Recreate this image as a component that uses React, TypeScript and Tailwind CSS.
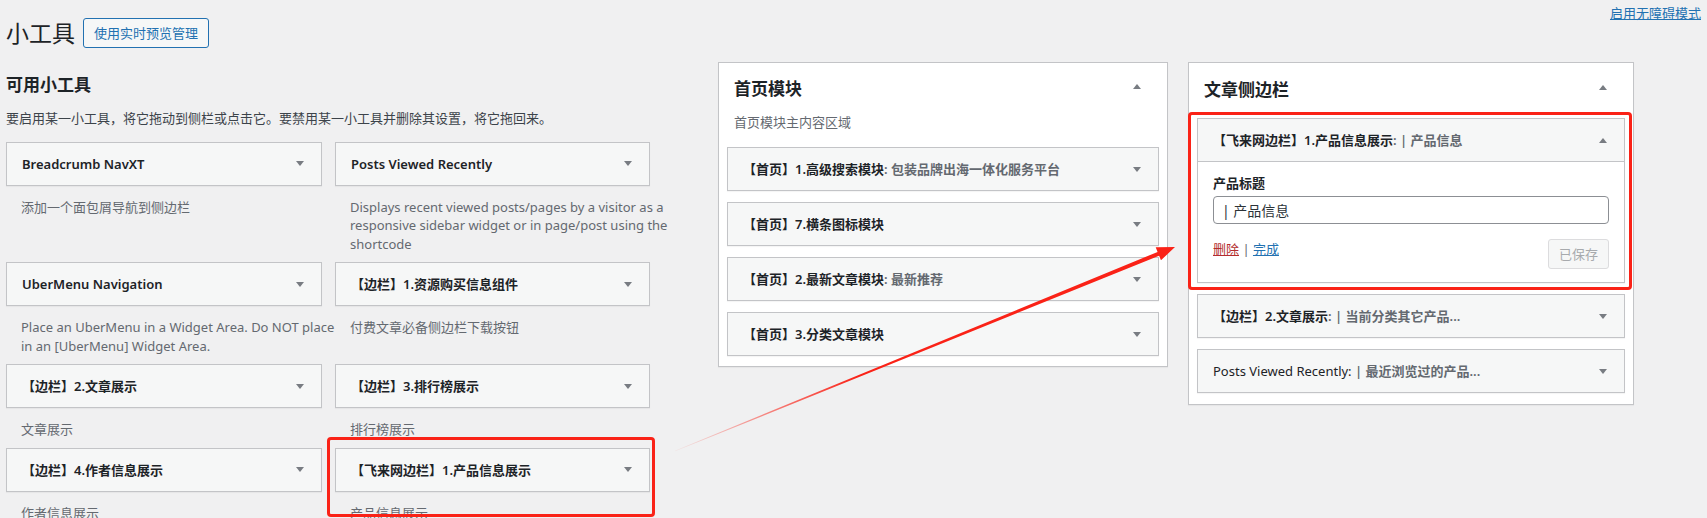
import React from "react";

const TriDown = () => (
  <svg width="8" height="5" viewBox="0 0 8 5" className="shrink-0">
    <polygon points="0,0 8,0 4,5" fill="#787c82" />
  </svg>
);
const TriUp = () => (
  <svg width="8" height="5" viewBox="0 0 8 5" className="shrink-0">
    <polygon points="0,5 8,5 4,0" fill="#787c82" />
  </svg>
);

function WidgetBox({ children }: { children: React.ReactNode }) {
  return (
    <div className="h-[44px] flex items-center justify-between border border-[#c3c4c7] bg-[#f6f7f7] pl-[15px] pr-[17px] shadow-[0_1px_1px_rgba(0,0,0,0.04)]">
      <div className="text-[13px] leading-[18px] font-semibold text-[#1d2327] whitespace-nowrap">
        {children}
      </div>
      <TriDown />
    </div>
  );
}

const Sub = ({ children }: { children: React.ReactNode }) => (
  <span className="text-[#646970]">{children}</span>
);

const leftItems: { title: string; desc: string[] }[] = [
  { title: "Breadcrumb NavXT", desc: ["添加一个面包屑导航到侧边栏"] },
  {
    title: "Posts Viewed Recently",
    desc: [
      "Displays recent viewed posts/pages by a visitor as a",
      "responsive sidebar widget or in page/post using the",
      "shortcode",
    ],
  },
  {
    title: "UberMenu Navigation",
    desc: ["Place an UberMenu in a Widget Area. Do NOT place", "in an [UberMenu] Widget Area."],
  },
  { title: "【边栏】1.资源购买信息组件", desc: ["付费文章必备侧边栏下载按钮"] },
  { title: "【边栏】2.文章展示", desc: ["文章展示"] },
  { title: "【边栏】3.排行榜展示", desc: ["排行榜展示"] },
  { title: "【边栏】4.作者信息展示", desc: ["作者信息展示"] },
  { title: "【飞来网边栏】1.产品信息展示", desc: ["产品信息展示"] },
];

export default function App() {
  return (
    <div className="relative w-[1707px] h-[518px] overflow-hidden bg-[#f0f0f1] font-['Segoe_UI','Noto_Sans','Noto_Sans_CJK_SC',sans-serif] text-[#3c434a]">
      {/* header */}
      <div className="flex justify-between items-start">
        <div className="flex items-center pt-[18px] pl-[6px]">
          <h1 className="text-[23px] leading-[30px] font-normal text-[#1d2327]">小工具</h1>
          <button className="ml-[8px] h-[30px] px-[10px] border border-[#2271b1] rounded-[3px] bg-[#f6f7f7] text-[13px] leading-[28px] text-[#2271b1]">
            使用实时预览管理
          </button>
        </div>
        <a className="mt-[4px] mr-[6px] text-[13px] leading-[18px] text-[#2271b1] underline">启用无障碍模式</a>
      </div>

      {/* main */}
      <div className="flex items-start mt-[14px] pl-[6px]">
        {/* left */}
        <div className="w-[644px]">
          <h2 className="mt-[11px] text-[17px] leading-[24px] font-semibold text-[#1d2327]">可用小工具</h2>
          <p className="mt-[12px] text-[13px] leading-[18.5px] text-[#3c434a]">
            要启用某一小工具，将它拖动到侧栏或点击它。要禁用某一小工具并删除其设置，将它拖回来。
          </p>
          <div className="mt-[14px] grid grid-cols-[316px_315px] gap-x-[13px]">
            {leftItems.map((it) => (
              <div key={it.title} className="pb-[9px]">
                <WidgetBox>{it.title}</WidgetBox>
                <div className="pt-[12px] px-[15px] text-[13px] leading-[18.5px] text-[#646970] whitespace-nowrap">
                  {it.desc.map((l, i) => (
                    <div key={i}>{l}</div>
                  ))}
                </div>
              </div>
            ))}
          </div>
        </div>

        {/* middle panel */}
        <div className="ml-[68px] w-[450px] bg-white border border-[#c3c4c7] pb-[10px] shadow-[0_1px_1px_rgba(0,0,0,0.04)]">
          <div className="flex items-center justify-between pl-[15px] pr-[26px] pt-[14px]">
            <h2 className="text-[17px] leading-[24px] font-semibold text-[#1d2327]">首页模块</h2>
            <span className="mb-[6px] flex">
              <TriUp />
            </span>
          </div>
          <p className="mt-[12px] px-[15px] text-[13px] leading-[18.5px] text-[#646970]">首页模块主内容区域</p>
          <div className="mt-[15.5px] px-[8px] flex flex-col gap-[11px]">
            <WidgetBox>
              【首页】1.高级搜索模块<Sub>: 包装品牌出海一体化服务平台</Sub>
            </WidgetBox>
            <WidgetBox>【首页】7.横条图标模块</WidgetBox>
            <WidgetBox>
              【首页】2.最新文章模块<Sub>: 最新推荐</Sub>
            </WidgetBox>
            <WidgetBox>【首页】3.分类文章模块</WidgetBox>
          </div>
        </div>

        {/* right panel */}
        <div className="ml-[20px] w-[446px] bg-white border border-[#c3c4c7] pb-[11px] shadow-[0_1px_1px_rgba(0,0,0,0.04)]">
          <div className="flex items-center justify-between pl-[15px] pr-[26px] pt-[15px]">
            <h2 className="text-[17px] leading-[24px] font-semibold text-[#1d2327]">文章侧边栏</h2>
            <span className="mb-[6px] flex">
              <TriUp />
            </span>
          </div>
          <div className="mt-[16px] px-[8px] flex flex-col gap-[11px]">
            {/* open widget */}
            <div className="border border-[#c3c4c7] bg-white shadow-[0_1px_1px_rgba(0,0,0,0.04)]">
              <div className="h-[43px] flex items-center justify-between bg-[#f6f7f7] border-b border-[#c3c4c7] pl-[15px] pr-[17px]">
                <div className="text-[13px] leading-[18px] font-semibold text-[#1d2327] whitespace-nowrap">
                  【飞来网边栏】1.产品信息展示<Sub>: | 产品信息</Sub>
                </div>
                <TriUp />
              </div>
              <div className="px-[15px] pt-[12px] pb-[13px]">
                <div className="text-[13px] leading-[18px] font-semibold text-[#1d2327]">产品标题</div>
                <input
                  readOnly
                  value="| 产品信息"
                  className="mt-[4px] block w-full h-[28px] px-[8px] border border-[#8c8f94] rounded-[4px] bg-white text-[14px] text-[#2c3338] outline-none"
                />
                <div className="mt-[15px] flex justify-between items-start">
                  <div className="mt-[1px] text-[13px] leading-[18px] text-[#646970]">
                    <a className="text-[#b32d2e] underline">删除</a> | <a className="text-[#2271b1] underline">完成</a>
                  </div>
                  <button className="h-[30px] px-[10px] border border-[#dcdcde] rounded-[3px] bg-[#f6f7f7] text-[13px] leading-[28px] text-[#a7aaad]">
                    已保存
                  </button>
                </div>
              </div>
            </div>
            <WidgetBox>
              【边栏】2.文章展示<Sub>: | 当前分类其它产品...</Sub>
            </WidgetBox>
            <WidgetBox>
              <span className="font-normal">Posts Viewed Recently: </span>
              <Sub>| 最近浏览过的产品...</Sub>
            </WidgetBox>
          </div>
        </div>
      </div>

      {/* annotations */}
      <div className="absolute left-[1188px] top-[112px] w-[444px] h-[178px] border-[3px] border-[#fa2217] rounded-[4px] pointer-events-none" />
      <div className="absolute left-[327px] top-[437px] w-[328px] h-[80px] border-[3px] border-[#fa2217] rounded-[4px] pointer-events-none" />
      <svg className="absolute inset-0 pointer-events-none" width="1707" height="518" viewBox="0 0 1707 518">
        <defs>
          <linearGradient id="arrowGrad" gradientUnits="userSpaceOnUse" x1="675" y1="451" x2="860" y2="376">
            <stop offset="0" stopColor="#fa2217" stopOpacity="0.05" />
            <stop offset="1" stopColor="#fa2217" stopOpacity="1" />
          </linearGradient>
        </defs>
        <polygon
          fill="url(#arrowGrad)"
          points="674.85,450.63 1157.58,251.95 1155.70,247.32 1175,247 1160.98,260.28 1159.10,255.65 675.15,451.37"
        />
      </svg>
    </div>
  );
}
